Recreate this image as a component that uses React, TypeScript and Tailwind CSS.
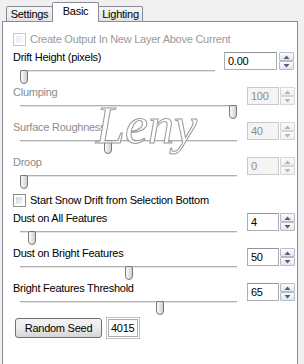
import React from "react";

const FONT = "font-['Liberation_Sans',Arial,sans-serif]";

function Checkbox({ disabled }: { disabled?: boolean }) {
  return (
    <div
      className={`w-[13px] h-[13px] shrink-0 border p-[2px] bg-white ${
        disabled ? "border-[#c8c8c8]" : "border-[#8e8f8f]"
      }`}
    >
      <div
        className={`w-full h-full bg-linear-to-br ${
          disabled ? "from-[#ececec] to-[#f8f8f8]" : "from-[#d4d4d4] to-[#fafafa]"
        }`}
      />
    </div>
  );
}

function Arrow({ up, disabled }: { up?: boolean; disabled?: boolean }) {
  const c = disabled ? "#b4b4b4" : "#4d6185";
  return (
    <svg width="7" height="4" viewBox="0 0 7 4">
      {up ? <path d="M0.5 4 L3.5 0.5 L6.5 4 Z" fill={c} /> : <path d="M0.5 0 L3.5 3.5 L6.5 0 Z" fill={c} />}
    </svg>
  );
}

function SpinBtn({ up, disabled }: { up?: boolean; disabled?: boolean }) {
  return (
    <div
      className={`h-[9px] w-[15px] flex items-center justify-center border rounded-[1px] bg-linear-to-b ${
        disabled
          ? "border-[#d6d6d6] from-[#fbfbfb] to-[#f0f0f0]"
          : "border-[#b8bcc4] from-[#fdfdfd] to-[#e4e6ea]"
      }`}
    >
      <Arrow up={up} disabled={disabled} />
    </div>
  );
}

function Spin({ value, disabled, wide }: { value: string; disabled?: boolean; wide?: boolean }) {
  return (
    <div className={`flex ${wide ? "gap-[2px]" : "gap-[1px]"} mt-[1px]`}>
      <div
        className={`${wide ? "w-[53px]" : "w-[32px]"} h-[18px] border flex items-center pl-[3px] ${
          disabled
            ? "border-[#c9c9c9] bg-[#f4f4f4] text-[#8d8d8d]"
            : "border-[#abadb3] border-t-[#8f949c] bg-white text-black"
        }`}
      >
        {value}
      </div>
      <div className="flex flex-col">
        <SpinBtn up disabled={disabled} />
        <SpinBtn disabled={disabled} />
      </div>
    </div>
  );
}

function Slider({ value, wide }: { value: number; wide?: boolean }) {
  const w = wide ? 195 : 217;
  const left = Math.round((value / 100) * (w - 8));
  return (
    <div className={`relative ml-[7px] mt-[2px] h-[14px] ${wide ? "w-[195px]" : "w-[217px]"}`}>
      <div className="mt-[6px] h-[2px] border-t border-t-[#b0b0b0] bg-[#e4e4e4]" />
      <div
        className="absolute top-0 w-[8px] h-[14px] border border-[#777777] rounded-t-[2px] rounded-b-[4px] bg-linear-to-r from-[#fbfbfb] to-[#d0d0d0]"
        style={{ left }}
      />
    </div>
  );
}

function Group({
  label,
  value,
  num,
  disabled,
  wide,
}: {
  label: string;
  value: string;
  num: number;
  disabled?: boolean;
  wide?: boolean;
}) {
  return (
    <div className="flex h-[35px] pl-[10px]">
      <div className={`${wide ? "w-[211px]" : "w-[234px]"} shrink-0`}>
        <div className={`h-[13px] leading-[13px] whitespace-nowrap ${disabled ? "text-[#8d8d8d]" : "text-black"}`}>
          {label}
        </div>
        <Slider value={num} wide={wide} />
      </div>
      <Spin value={value} disabled={disabled} wide={wide} />
    </div>
  );
}

export default function App() {
  return (
    <div
      className={`relative w-[304px] h-[364px] overflow-hidden bg-[#f0f0f0] ${FONT} text-[11px] tracking-[-0.25px] text-black`}
    >
      {/* tabs */}
      <div className="flex items-end h-[21px] pl-[6px]">
        <div className="w-[47px] h-[15px] flex items-center justify-center border border-b-0 border-[#898c95] rounded-t-[2px] bg-linear-to-b from-[#f6f6f6] to-[#e3e3e3] leading-[13px]">
          Settings
        </div>
        <div className="relative z-10 top-[1px] -ml-px w-[47px] h-[20px] flex items-center justify-center pb-[3px] border border-b-0 border-[#898c95] rounded-t-[2px] bg-white leading-[13px]">
          Basic
        </div>
        <div className="-ml-px w-[45px] h-[15px] flex items-center justify-center border border-b-0 border-[#898c95] rounded-t-[2px] bg-linear-to-b from-[#f6f6f6] to-[#e3e3e3] leading-[13px]">
          Lighting
        </div>
      </div>

      {/* panel */}
      <div className="ml-[2px] w-[296px] h-[360px] border border-[#898c95] bg-white pt-[11px]">
        <div className="flex items-center gap-[4px] pl-[10px] h-[13px]">
          <Checkbox disabled />
          <span className="text-[#9a9a9a] leading-[13px] whitespace-nowrap">
            Create Output In New Layer Above Current
          </span>
        </div>

        <div className="mt-[5px]">
          <Group label="Drift Height (pixels)" value="0.00" num={0} wide />
          <Group label="Clumping" value="100" num={100} disabled />
          <Group label="Surface Roughness" value="40" num={40} disabled />
          <Group label="Droop" value="0" num={0} disabled />
        </div>

        <div className="mt-[3px] flex items-center gap-[4px] pl-[10px] h-[13px]">
          <Checkbox />
          <span className="leading-[13px] whitespace-nowrap">Start Snow Drift from Selection Bottom</span>
        </div>

        <div className="mt-[5px]">
          <Group label="Dust on All Features" value="4" num={4} />
          <Group label="Dust on Bright Features" value="50" num={50} />
          <Group label="Bright Features Threshold" value="65" num={65} />
        </div>

        <div className="flex items-center h-[22px] pl-[12px] gap-[4px]">
          <button className="w-[87px] h-[20px] border border-[#707070] rounded-[3px] bg-linear-to-b from-[#f3f3f3] via-[#ebebeb] to-[#d5d5d5] leading-[13px] text-black">
            Random Seed
          </button>
          <div className="w-[34px] h-[22px] border border-[#c2c4c8] p-px">
            <div className="h-full border border-[#abadb3] flex items-center pl-[2px] leading-[13px]">4015</div>
          </div>
        </div>
      </div>

      {/* watermark */}
      <div className="absolute left-[96px] top-[100px] font-['Liberation_Serif',serif] italic text-[52px] leading-none tracking-normal text-white [-webkit-text-stroke:1px_#8e8e8e] opacity-90 pointer-events-none">
        Leny
      </div>
    </div>
  );
}
